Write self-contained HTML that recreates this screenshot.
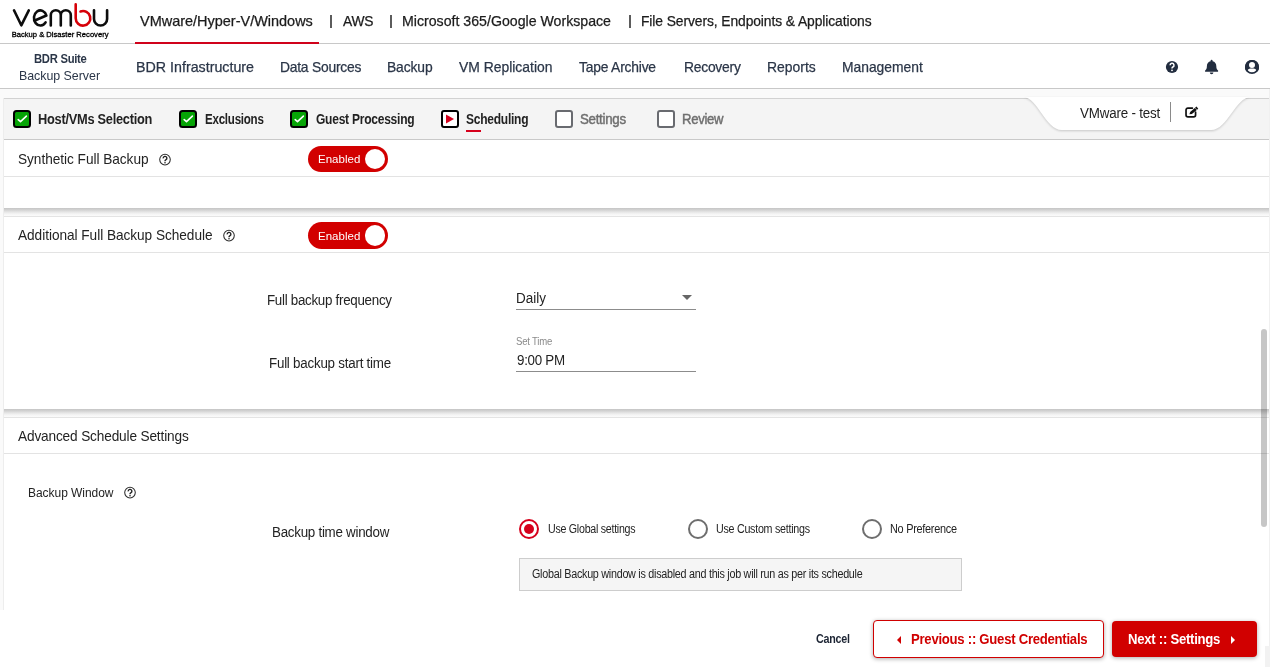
<!DOCTYPE html>
<html>
<head>
<meta charset="utf-8">
<title>Vembu BDR Suite - Scheduling</title>
<style>
*{box-sizing:border-box;margin:0;padding:0}
html,body{width:1270px;height:667px;overflow:hidden;background:#fff}
body{font-family:"Liberation Sans",sans-serif;color:#232323;position:relative}
.a{position:absolute}
.t{position:absolute;white-space:nowrap;line-height:1;transform-origin:0 50%}
#band{left:0;top:89px;width:1270px;height:521px;background:#fafafa}
#main{left:4px;top:98px;width:1265px;height:512px;background:#fff}
#steps{left:4px;top:98px;width:1265px;height:42px;background:#f4f4f4;border-top:1px solid #d2d2d2;border-bottom:1px solid #c9c9c9}
.gap{left:4px;width:1265px;background:#fafafa}
.hr{left:4px;width:1265px;height:1px;background:#e3e3e3}
.cb{width:18px;height:18px;border:2px solid #000;border-radius:3.5px;background:#06a406;top:110px}
.cbe{width:18px;height:18px;border:2px solid #696b70;border-radius:3px;background:#fff;top:110px}
.tog{left:308px;width:80px;height:26.5px;border-radius:14px;background:#d20000}
.tog i{position:absolute;left:57px;top:3px;width:20.4px;height:20.4px;border-radius:50%;background:#fff}
.radio{width:20px;height:20px;border-radius:50%;border:2px solid #6e6e6e;background:#fff;top:519px}
.radio.on{border-color:#d6001c}
.radio.on i{position:absolute;left:3px;top:3px;width:10px;height:10px;border-radius:50%;background:#d6001c}
.ul{left:516px;width:180px;height:1px;background:#8c8c8c}
</style>
</head>
<body>
<!-- header backgrounds / borders -->
<div class="a" style="left:0;top:43px;width:1270px;height:1px;background:#c8c8c8"></div>
<div class="a" style="left:135px;top:42px;width:184px;height:2px;background:#d0021b"></div>
<div class="a" style="left:0;top:88px;width:1270px;height:1px;background:#c8c8c8"></div>

<div class="a" style="left:330px;top:15px;width:2px;height:13px;background:#5c5c5c"></div>
<div class="a" style="left:390px;top:15px;width:2px;height:13px;background:#5c5c5c"></div>
<div class="a" style="left:629px;top:15px;width:2px;height:13px;background:#5c5c5c"></div>
<!-- logo -->
<svg class="a" style="left:0;top:0" width="130" height="43" viewBox="0 0 130 43">
  <g fill="none" stroke="#0d0d0d" stroke-width="2.6" stroke-linecap="round" stroke-linejoin="round">
    <path d="M14 10.3 L21.3 25.3 L28.8 10.3"/>
    <path d="M36 20 L46.4 15.5 A6.4 7.6 0 1 0 45.6 22.3"/>
    <path d="M50.8 25.5 V15.3 A5 5 0 0 1 60.8 15.3 V25.5 M60.8 15.3 A5 5 0 0 1 70.8 15.3 V25.5"/>
    <path d="M94 10.3 V19 A6.55 6.55 0 0 0 107.1 19 V10.3"/>
  </g>
  <path d="M75.7 4.4 V18.3 A7.3 7.3 0 1 0 80.5 11.44" fill="none" stroke="#d60008" stroke-width="2.6" stroke-linecap="round"/>
</svg>
<svg class="a" style="left:0;top:28px;opacity:.999" width="130" height="12" viewBox="0 28 130 12">
  <text x="11.7" y="36.7" font-family="Liberation Sans, sans-serif" font-size="7.5" fill="#000" stroke="#000" stroke-width="0.3" textLength="96.8" lengthAdjust="spacingAndGlyphs">Backup &amp; Disaster Recovery</text>
</svg>

<!-- header icons -->
<svg class="a" style="left:1164px;top:58px" width="100" height="18" viewBox="0 0 100 18">
  <circle cx="8" cy="9" r="6.1" fill="#222d3f"/>
  <path d="M6.1 7.3 A1.95 1.95 0 1 1 8.9 9 Q8 9.5 8 10.4" fill="none" stroke="#fff" stroke-width="1.5"/>
  <circle cx="8" cy="12.3" r="0.9" fill="#fff"/>
  <path d="M47.6 1.8 a1 1 0 0 1 1 1 v0.5 c2.3 0.5 3.7 2.4 3.7 4.7 c0 2.6 0.8 3.6 1.7 4.5 c0.5 0.5 0.2 1.3 -0.5 1.3 h-11.8 c-0.7 0 -1 -0.8 -0.5 -1.3 c0.9 -0.9 1.7 -1.9 1.7 -4.5 c0 -2.3 1.4 -4.2 3.7 -4.7 v-0.5 a1 1 0 0 1 1 -1 z M45.8 14.4 h3.6 a1.8 1.8 0 0 1 -3.6 0 z" fill="#222d3f"/>
  <circle cx="88" cy="9" r="6.2" fill="#fff" stroke="#222d3f" stroke-width="1.7"/>
  <circle cx="88" cy="6.9" r="3" fill="#fff" stroke="#222d3f" stroke-width="0"/>
  <path d="M88 2 a7 7 0 0 0 -5.2 11.7 c0.6 -2.2 2.4 -3.2 3.6 -3.2 h3.2 c1.2 0 3 1 3.6 3.2 A7 7 0 0 0 88 2 z M88 3.9 a3 3 0 1 1 0 6 a3 3 0 0 1 0 -6 z" fill="#222d3f" fill-rule="evenodd"/>
</svg>

<div id="band" class="a"></div>
<div class="a" style="left:3px;top:98px;width:1px;height:512px;background:#ededed"></div>
<div id="main" class="a"></div>
<div id="steps" class="a"></div>

<!-- step icons -->
<div class="a cb" style="left:13px"></div>
<div class="a cb" style="left:179px"></div>
<div class="a cb" style="left:290px"></div>
<svg class="a" style="left:13px;top:110px" width="300" height="18" viewBox="0 0 300 18" fill="none" stroke="#fff" stroke-width="1.6" stroke-linecap="round" stroke-linejoin="round">
  <path d="M5.2 9.6 L7.5 11.7 L13.4 6.1"/>
  <path d="M171.2 9.6 L173.5 11.7 L179.4 6.1"/>
  <path d="M282.2 9.6 L284.5 11.7 L290.4 6.1"/>
</svg>
<div class="a cbe" style="left:441px;border-color:#000"></div>
<svg class="a" style="left:441px;top:110px" width="18" height="18" viewBox="0 0 18 18"><path d="M5 4.4 L13 8.9 L5 13.4 Z" fill="#d6001c"/></svg>
<div class="a" style="left:466px;top:130px;width:15px;height:2px;background:#d6001c"></div>
<div class="a cbe" style="left:555px"></div>
<div class="a cbe" style="left:657px"></div>

<!-- job name tab -->
<svg class="a" style="left:1016px;top:92px;filter:drop-shadow(0 1px 1px rgba(0,0,0,.18))" width="240" height="44" viewBox="0 0 240 44">
  <path d="M7 5 C22 5 29 38 46 38 L195 38 C212 38 219 5 235 5 Z" fill="#fff"/>
</svg>
<div class="a" style="left:1170px;top:102px;width:1px;height:20px;background:#8a8a8a"></div>
<svg class="a" style="left:1183px;top:103px" width="18" height="18" viewBox="0 0 18 18">
  <path d="M9.4 5.07 H4.93 A1.9 1.9 0 0 0 3.03 6.97 V12.03 A1.9 1.9 0 0 0 4.93 13.93 H10.67 A1.9 1.9 0 0 0 12.57 12.03 V9.1" fill="none" stroke="#111" stroke-width="1.7" stroke-linecap="round"/>
  <path d="M6.4 11.3 L7.16 8.88 L13.53 3.57 L15.27 5.63 L8.90 10.94 Z" fill="#111"/>
  <path d="M11.98 4.69 L13.92 6.97" stroke="#fff" stroke-width="0.5"/>
</svg>

<!-- card 1 -->
<div class="a hr" style="top:176px"></div>
<div class="a gap" style="top:208px;height:8px;background:linear-gradient(#c5c5c5 0,#d3d3d3 2px,#e6e6e6 4px,#f5f5f5 6px,#fbfbfb 8px)"></div>
<div class="a hr" style="top:216px;background:#e4e4e4"></div>
<div class="a tog" style="top:145.9px"><i></i></div>

<!-- card 2 -->
<div class="a hr" style="top:252px"></div>
<div class="a tog" style="top:222.4px"><i></i></div>
<div class="a ul" style="top:309px"></div>
<svg class="a" style="left:682px;top:295px" width="10" height="5" viewBox="0 0 10 5"><path d="M0 0 H10 L5 5 Z" fill="#666"/></svg>
<div class="a ul" style="top:371px"></div>
<div class="a gap" style="top:409px;height:8px;background:linear-gradient(#c5c5c5 0,#d3d3d3 2px,#e6e6e6 4px,#f5f5f5 6px,#fbfbfb 8px)"></div>
<div class="a hr" style="top:417px;background:#e4e4e4"></div>

<!-- card 3 -->
<div class="a hr" style="top:453px"></div>
<div class="a radio on" style="left:519px"><i></i></div>
<div class="a radio" style="left:688px"></div>
<div class="a radio" style="left:862px"></div>
<div class="a" style="left:519px;top:558px;width:443px;height:33px;background:#f5f5f5;border:1px solid #cdcdcd"></div>

<!-- help icons -->
<svg class="a" style="left:158px;top:153px" width="14" height="14" viewBox="0 0 14 14"><circle cx="7" cy="6.6" r="5.3" fill="#fff" stroke="#2e2e2e" stroke-width="1.05"/><path d="M5.2 5.4 A1.85 1.85 0 1 1 7.8 6.9 Q7 7.4 7 8.2" fill="none" stroke="#222" stroke-width="1.4"/><circle cx="7" cy="9.8" r="0.8" fill="#222"/></svg>
<svg class="a" style="left:222px;top:229px" width="14" height="14" viewBox="0 0 14 14"><circle cx="7" cy="6.6" r="5.3" fill="#fff" stroke="#2e2e2e" stroke-width="1.05"/><path d="M5.2 5.4 A1.85 1.85 0 1 1 7.8 6.9 Q7 7.4 7 8.2" fill="none" stroke="#222" stroke-width="1.4"/><circle cx="7" cy="9.8" r="0.8" fill="#222"/></svg>
<svg class="a" style="left:122.6px;top:486px" width="14" height="14" viewBox="0 0 14 14"><circle cx="7" cy="6.6" r="5.3" fill="#fff" stroke="#2e2e2e" stroke-width="1.05"/><path d="M5.2 5.4 A1.85 1.85 0 1 1 7.8 6.9 Q7 7.4 7 8.2" fill="none" stroke="#222" stroke-width="1.4"/><circle cx="7" cy="9.8" r="0.8" fill="#222"/></svg>


<!-- scrollbar + right edge -->
<div class="a" style="left:1269px;top:89px;width:1px;height:578px;background:#f0f0f0"></div>
<div class="a" style="left:1261px;top:329px;width:6px;height:198px;border-radius:3px;background:rgba(0,0,0,.225)"></div>

<!-- footer -->
<div class="a" style="left:0;top:610px;width:1269px;height:57px;background:#fff"></div>
<div class="a" style="left:1265px;top:646px;width:5px;height:21px;background:#f2f2f2"></div>
<div class="a" style="left:873px;top:620px;width:231px;height:38px;border:1px solid #d00000;border-radius:4px;background:#fff;box-shadow:0 1px 4px rgba(0,0,0,.33)"></div>
<div class="a" style="left:1112px;top:621px;width:145px;height:36px;border-radius:4px;background:#d10000;box-shadow:0 1px 4px rgba(0,0,0,.33)"></div>
<svg class="a" style="left:897px;top:636px" width="4" height="8" viewBox="0 0 4 8"><path d="M4 0 V8 L0 4 Z" fill="#d00000"/></svg>
<svg class="a" style="left:1231px;top:636px" width="4" height="8" viewBox="0 0 4 8"><path d="M0 0 V8 L4 4 Z" fill="#fff"/></svg>

<div class="t" style="left:140.40px;top:14.01px;font-size:14.5px;color:#1c1c1c;-webkit-text-stroke:0.25px #1c1c1c;letter-spacing:-0.011px;transform:scaleX(0.9992);">VMware/Hyper-V/Windows</div>
<div class="t" style="left:343.40px;top:14.01px;font-size:14.5px;color:#1c1c1c;-webkit-text-stroke:0.25px #1c1c1c;letter-spacing:-0.300px;transform:scaleX(0.9533);">AWS</div>
<div class="t" style="left:402.42px;top:14.01px;font-size:14.5px;color:#1c1c1c;-webkit-text-stroke:0.25px #1c1c1c;transform:scaleX(0.9761);">Microsoft 365/Google Workspace</div>
<div class="t" style="left:641.25px;top:14.01px;font-size:14.5px;color:#1c1c1c;-webkit-text-stroke:0.25px #1c1c1c;letter-spacing:-0.096px;transform:scaleX(0.9550);">File Servers, Endpoints &amp; Applications</div>
<div class="t" style="left:34.30px;top:53.01px;font-size:12.5px;color:#2b3648;font-weight:bold;letter-spacing:-0.300px;transform:scaleX(0.9002);">BDR Suite</div>
<div class="t" style="left:18.85px;top:69.00px;font-size:13px;color:#2b3648;letter-spacing:-0.036px;transform:scaleX(0.9550);">Backup Server</div>
<div class="t" style="left:135.62px;top:60.01px;font-size:14.5px;color:#2b3648;-webkit-text-stroke:0.25px #2b3648;transform:scaleX(0.9828);">BDR Infrastructure</div>
<div class="t" style="left:279.65px;top:60.01px;font-size:14.5px;color:#2b3648;-webkit-text-stroke:0.25px #2b3648;letter-spacing:-0.242px;transform:scaleX(0.9550);">Data Sources</div>
<div class="t" style="left:386.85px;top:60.01px;font-size:14.5px;color:#2b3648;-webkit-text-stroke:0.25px #2b3648;letter-spacing:-0.128px;transform:scaleX(0.9550);">Backup</div>
<div class="t" style="left:459.00px;top:60.01px;font-size:14.5px;color:#2b3648;-webkit-text-stroke:0.25px #2b3648;transform:scaleX(0.9580);">VM Replication</div>
<div class="t" style="left:579.40px;top:60.01px;font-size:14.5px;color:#2b3648;-webkit-text-stroke:0.25px #2b3648;letter-spacing:-0.212px;transform:scaleX(0.9550);">Tape Archive</div>
<div class="t" style="left:683.64px;top:60.01px;font-size:14.5px;color:#2b3648;-webkit-text-stroke:0.25px #2b3648;letter-spacing:-0.252px;transform:scaleX(0.9550);">Recovery</div>
<div class="t" style="left:767.24px;top:60.01px;font-size:14.5px;color:#2b3648;-webkit-text-stroke:0.25px #2b3648;transform:scaleX(0.9604);">Reports</div>
<div class="t" style="left:842.04px;top:60.01px;font-size:14.5px;color:#2b3648;-webkit-text-stroke:0.25px #2b3648;letter-spacing:-0.010px;transform:scaleX(0.9550);">Management</div>
<div class="t" style="left:38.40px;top:112.00px;font-size:14.5px;color:#222;font-weight:bold;letter-spacing:-0.300px;transform:scaleX(0.8834);">Host/VMs Selection</div>
<div class="t" style="left:204.60px;top:112.00px;font-size:14.5px;color:#222;font-weight:bold;letter-spacing:-0.300px;transform:scaleX(0.7968);">Exclusions</div>
<div class="t" style="left:315.50px;top:112.00px;font-size:14.5px;color:#222;font-weight:bold;letter-spacing:-0.300px;transform:scaleX(0.8301);">Guest Processing</div>
<div class="t" style="left:466.20px;top:112.00px;font-size:14.5px;color:#222;font-weight:bold;letter-spacing:-0.300px;transform:scaleX(0.8286);">Scheduling</div>
<div class="t" style="left:580.30px;top:112.00px;font-size:14px;color:#6f6f6f;-webkit-text-stroke:0.45px #6f6f6f;letter-spacing:-0.300px;transform:scaleX(0.9502);">Settings</div>
<div class="t" style="left:681.76px;top:112.00px;font-size:14px;color:#6f6f6f;-webkit-text-stroke:0.45px #6f6f6f;letter-spacing:-0.300px;transform:scaleX(0.9365);">Review</div>
<div class="t" style="left:1079.60px;top:106.01px;font-size:14px;color:#222;letter-spacing:-0.189px;transform:scaleX(0.9550);">VMware - test</div>
<div class="t" style="left:18.40px;top:152.01px;font-size:14.3px;color:#232323;letter-spacing:-0.038px;transform:scaleX(0.9550);">Synthetic Full Backup</div>
<div class="t" style="left:318.40px;top:154.00px;font-size:11.5px;color:#fff;letter-spacing:0.032px;transform:scaleX(0.9992);">Enabled</div>
<div class="t" style="left:18.40px;top:228.01px;font-size:14.3px;color:#232323;letter-spacing:-0.044px;transform:scaleX(0.9550);">Additional Full Backup Schedule</div>
<div class="t" style="left:318.40px;top:231.00px;font-size:11.5px;color:#fff;letter-spacing:0.032px;transform:scaleX(0.9992);">Enabled</div>
<div class="t" style="left:266.65px;top:293.00px;font-size:14px;color:#232323;letter-spacing:-0.300px;transform:scaleX(0.9541);">Full backup frequency</div>
<div class="t" style="left:269.05px;top:356.00px;font-size:14px;color:#232323;letter-spacing:-0.245px;transform:scaleX(0.9550);">Full backup start time</div>
<div class="t" style="left:515.64px;top:291.01px;font-size:14px;color:#232323;transform:scaleX(0.9629);">Daily</div>
<div class="t" style="left:516.20px;top:337.00px;font-size:10px;color:#8a8a8a;letter-spacing:-0.220px;transform:scaleX(0.9550);">Set Time</div>
<div class="t" style="left:516.60px;top:353.01px;font-size:14px;color:#232323;letter-spacing:-0.300px;transform:scaleX(0.9542);">9:00 PM</div>
<div class="t" style="left:18.40px;top:429.01px;font-size:14.3px;color:#232323;letter-spacing:-0.161px;transform:scaleX(0.9550);">Advanced Schedule Settings</div>
<div class="t" style="left:27.70px;top:487.01px;font-size:12px;color:#232323;letter-spacing:-0.039px;transform:scaleX(0.9992);">Backup Window</div>
<div class="t" style="left:272.44px;top:525.00px;font-size:14px;color:#232323;letter-spacing:-0.281px;transform:scaleX(0.9550);">Backup time window</div>
<div class="t" style="left:547.60px;top:523.01px;font-size:12px;color:#232323;letter-spacing:-0.300px;transform:scaleX(0.8880);">Use Global settings</div>
<div class="t" style="left:716.00px;top:523.01px;font-size:12px;color:#232323;letter-spacing:-0.300px;transform:scaleX(0.8926);">Use Custom settings</div>
<div class="t" style="left:889.70px;top:523.01px;font-size:12px;color:#232323;letter-spacing:-0.300px;transform:scaleX(0.9082);">No Preference</div>
<div class="t" style="left:532.00px;top:568.01px;font-size:12px;color:#232323;letter-spacing:-0.300px;transform:scaleX(0.8979);">Global Backup window is disabled and this job will run as per its schedule</div>
<div class="t" style="left:815.60px;top:632.00px;font-size:13px;color:#1c2433;font-weight:bold;letter-spacing:-0.300px;transform:scaleX(0.8243);">Cancel</div>
<div class="t" style="left:910.72px;top:631.01px;font-size:15px;color:#d00000;font-weight:bold;letter-spacing:-0.300px;transform:scaleX(0.8756);">Previous :: Guest Credentials</div>
<div class="t" style="left:1128.32px;top:631.01px;font-size:15px;color:#fff;font-weight:bold;letter-spacing:-0.300px;transform:scaleX(0.8755);">Next :: Settings</div>
</body>
</html>
